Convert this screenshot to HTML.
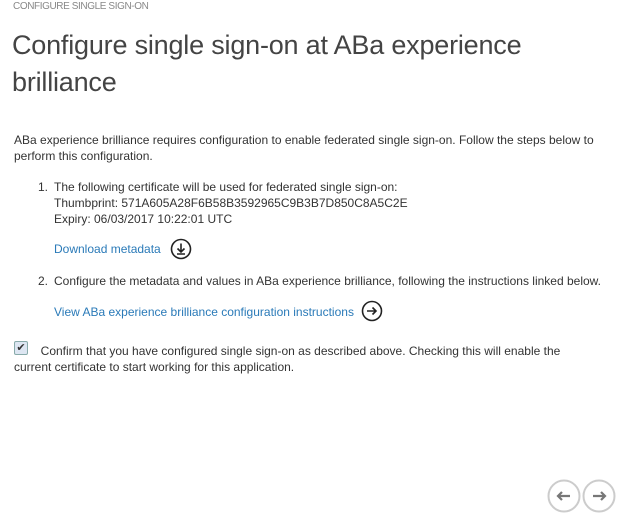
<!DOCTYPE html><html><head><style>
body{margin:0;width:625px;height:520px;background:#fff;font-family:"Liberation Sans",sans-serif;color:#333;position:relative;overflow:hidden}
.a{position:absolute;white-space:nowrap}
.s{font-size:12px;line-height:16px}
.l{color:#2a7ab8}
</style></head><body>
<div class="a" style="left:13px;top:1px;font-size:10px;color:#888;letter-spacing:-0.4px">CONFIGURE SINGLE SIGN-ON</div>
<div class="a" style="left:12px;top:27px;font-size:27px;line-height:37px;color:#444;letter-spacing:-0.2px">Configure single sign-on at ABa experience<br>brilliance</div>
<div class="a s" style="left:14px;top:132px">ABa experience brilliance requires configuration to enable federated single sign-on. Follow the steps below to<br>perform this configuration.</div>
<div class="a s" style="left:38px;top:179px">1.</div>
<div class="a s" style="left:54px;top:179px">The following certificate will be used for federated single sign-on:<br>Thumbprint: 571A605A28F6B58B3592965C9B3B7D850C8A5C2E<br>Expiry: 06/03/2017 10:22:01 UTC</div>
<div class="a s l" style="left:54px;top:241px">Download metadata</div>
<svg class="a" style="left:170px;top:238px" width="22" height="22"><circle cx="11" cy="11" r="9.5" fill="none" stroke="#222" stroke-width="1.6"/><path d="M11 5.5v8M7.5 10.5l3.5 3.5 3.5-3.5M7 16h8" fill="none" stroke="#222" stroke-width="1.6"/></svg>
<div class="a s" style="left:38px;top:273px">2.</div>
<div class="a s" style="left:54px;top:273px">Configure the metadata and values in ABa experience brilliance, following the instructions linked below.</div>
<div class="a s l" style="left:54px;top:304px">View ABa experience brilliance configuration instructions</div>
<svg class="a" style="left:361px;top:300px" width="22" height="22"><circle cx="11" cy="11" r="9.5" fill="none" stroke="#222" stroke-width="1.6"/><path d="M6 11h9M11.5 7.5 15 11l-3.5 3.5" fill="none" stroke="#222" stroke-width="1.6"/></svg>
<div class="a" style="left:14px;top:341px;width:12px;height:12px;border:1px solid #8aa;background:#dde6f2;border-radius:2px;font-size:11px;line-height:12px;text-align:center">✔</div>
<div class="a s" style="left:14px;top:343px">&nbsp;&nbsp;&nbsp;&nbsp;&nbsp;&nbsp;&nbsp;&nbsp;Confirm that you have configured single sign-on as described above. Checking this will enable the<br>current certificate to start working for this application.</div>
<svg class="a" style="left:545px;top:478px" width="75" height="36"><circle cx="19" cy="18" r="15.5" fill="none" stroke="#ccc" stroke-width="2"/><circle cx="54" cy="18" r="15.5" fill="none" stroke="#ccc" stroke-width="2"/><path d="M25 18H13M17 14l-4 4 4 4" fill="none" stroke="#777" stroke-width="2.2"/><path d="M48 18h12M56 14l4 4-4 4" fill="none" stroke="#777" stroke-width="2.2"/></svg>
</body></html>
